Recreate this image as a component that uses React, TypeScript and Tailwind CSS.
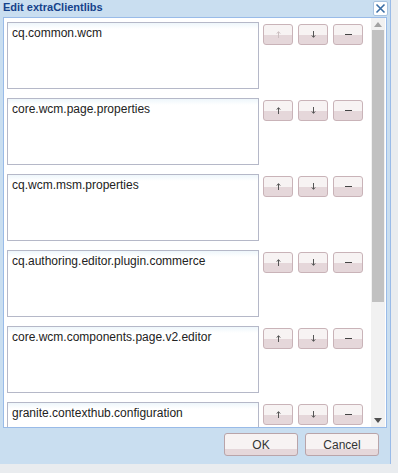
const items = [
  "cq.common.wcm",
  "core.wcm.page.properties",
  "cq.wcm.msm.properties",
  "cq.authoring.editor.plugin.commerce",
  "core.wcm.components.page.v2.editor",
  "granite.contexthub.configuration",
];

function Arrow({ down, color }: { down?: boolean; color: string }) {
  return (
    <svg width="5" height="7" viewBox="0 0 5 7" className={down ? "rotate-180" : ""}>
      <path d="M2.5 1 V7 M0.8 2.6 L2.5 0.6 L4.2 2.6" stroke={color} strokeWidth="1" fill="none" />
    </svg>
  );
}

function SmallButton({ kind, disabled }: { kind: "up" | "down" | "remove"; disabled?: boolean }) {
  const color = disabled ? "#cbbfc1" : "#555";
  return (
    <button className="flex h-[21px] w-[30px] items-center justify-center rounded-[3px] border border-[#c9b3b8] bg-[linear-gradient(#f7f3f3_0%,#f7f3f3_55%,#e5d7da_55%,#e5d7da_100%)]">
      {kind === "remove" ? (
        <span className="block h-[1px] w-[7px] bg-[#444]" />
      ) : (
        <Arrow down={kind === "down"} color={color} />
      )}
    </button>
  );
}

function DialogButton({ label }: { label: string }) {
  return (
    <button className="flex h-[23px] w-[74px] items-center justify-center rounded-[3px] border border-[#b9a4a9] bg-[linear-gradient(#f7f3f3_0%,#f7f3f3_70%,#e5d7da_70%,#e5d7da_100%)] text-[12px] text-[#333]">
      {label}
    </button>
  );
}

export default function App() {
  return (
    <div className="flex h-[473px] w-[398px] bg-[#e9ecef] font-['Liberation_Sans',Arial,sans-serif]">
      <div className="flex h-[464px] w-[391px] flex-col border-r border-[#99bbe8] bg-[#c9def0]">
        <div className="flex h-[17px] items-start justify-between pl-[3px] pr-[2px]">
          <span className="pt-[1px] text-[11px] font-bold leading-[13px] text-[#15428b]">Edit extraClientlibs</span>
          <span className="mt-[1px] flex h-[15px] w-[15px] items-center justify-center rounded-[2px] border border-[#a9c4e0] bg-white">
            <svg width="11" height="11" viewBox="0 0 11 11">
              <path d="M1.5 1.5 L9.5 9.5 M9.5 1.5 L1.5 9.5" stroke="#3a6ea5" strokeWidth="1.6" />
            </svg>
          </span>
        </div>
        <div className="mx-[3px] flex h-[411px] border border-[#99bbe8] bg-white">
          <div className="flex flex-1 flex-col gap-[9px] overflow-hidden pl-[3px] pt-[4px]">
            {items.map((t, i) => (
              <div key={t} className="flex shrink-0 items-start">
                <div className="h-[67px] w-[252px] shrink-0 border border-[#b5b8c8] bg-white bg-[linear-gradient(#eef6fb,#ffffff_6px)] px-[4px] pt-[2px] text-[12px] leading-[16px] text-[#222]">
                  {t}
                </div>
                <div className="ml-[4px] mt-[2px] flex gap-[5px]">
                  <SmallButton kind="up" disabled={i === 0} />
                  <SmallButton kind="down" />
                  <SmallButton kind="remove" />
                </div>
              </div>
            ))}
          </div>
          <div className="mr-[1px] flex w-[14px] flex-col bg-[#f1f1f1]">
            <div className="flex h-[12px] items-center justify-center">
              <svg width="8" height="5" viewBox="0 0 8 5">
                <path d="M0 5 L4 0 L8 5 Z" fill="#a3a3a3" />
              </svg>
            </div>
            <div className="mx-[1px] h-[272px] bg-[#c1c1c1]" />
            <div className="flex-1" />
            <div className="flex h-[14px] items-center justify-center">
              <svg width="8" height="5" viewBox="0 0 8 5">
                <path d="M0 0 L8 0 L4 5 Z" fill="#505050" />
              </svg>
            </div>
          </div>
        </div>
        <div className="flex justify-end gap-[7px] pr-[11px] pt-[5px]">
          <DialogButton label="OK" />
          <DialogButton label="Cancel" />
        </div>
      </div>
    </div>
  );
}
